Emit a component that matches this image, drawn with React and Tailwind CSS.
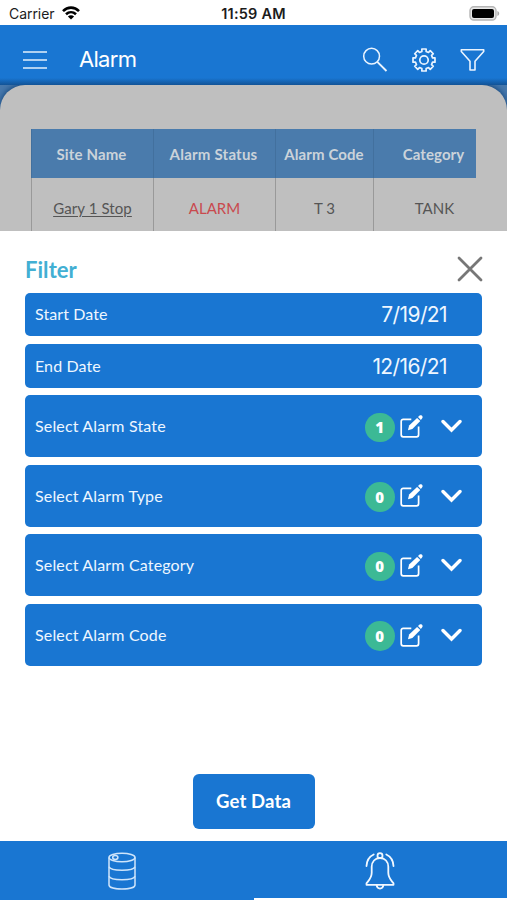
import React, { useState } from 'react'

const columns = [
  { label: 'Site Name', width: 'w-[122px]', head: 'tracking-[0.150px] pr-[2px]' },
  { label: 'Alarm Status', width: 'w-[122px]', head: 'tracking-[0.220px] pr-[2px]' },
  { label: 'Alarm Code', width: 'w-[98px]', head: 'tracking-[0.100px] pr-[1px]' },
  { label: 'Category', width: 'w-[120px]', head: 'tracking-[0.100px]' }
]

const dates = [
  { label: 'Start Date', value: '7/19/21' },
  { label: 'End Date', value: '12/16/21' }
]

const selects = [
  { label: 'Select Alarm State', count: 1 },
  { label: 'Select Alarm Type', count: 0 },
  { label: 'Select Alarm Category', count: 0 },
  { label: 'Select Alarm Code', count: 0 }
]

// outline of an eight tooth cog around (13, 13)
function gearPath() {
  const at = (r, deg) => {
    const a = (deg * Math.PI) / 180
    return `${(13 + r * Math.cos(a)).toFixed(2)} ${(13 + r * Math.sin(a)).toFixed(2)}`
  }
  const pts = []
  for (let i = 0; i < 8; i++) {
    const c = i * 45
    pts.push(at(8.8, c - 14), at(11.2, c - 11), at(11.2, c + 11), at(8.8, c + 14))
  }
  return `M${pts.join('L')}Z`
}

function StatusBar() {
  return (
    <div className="h-[25px] px-[9px] grid grid-cols-3 items-center text-[14px] text-[#1c1c1c]">
      <div className="flex items-center gap-[7px] pt-[2px]">
        <span className="tracking-[-0.05px]">Carrier</span>
        <svg width="18" height="14" viewBox="0 0 18 14" className="mb-[1px]" fill="none" stroke="#000" strokeWidth="2.6">
          <path d="M1 5.100C5.600.5 12.400.5 17 5.100" />
          <path d="M4 8.300c3-2.800 7-2.800 10 0" />
          <path d="M9 13.600 5.900 10.500c1.800-1.600 4.400-1.600 6.200 0Z" fill="#000" stroke="none" />
        </svg>
      </div>
      <div className="pt-[2px] text-center font-semibold whitespace-nowrap text-[14.500px] tracking-[0.200px]">11:59 AM</div>
      <div className="flex justify-end pt-[1px] -mr-[2px]">
        <svg width="32" height="15" viewBox="0 0 32 15">
          <rect x="2" y=".8" width="26" height="13.200" rx="3.800" fill="#e8e8e8" stroke="#b5b5b5" strokeWidth="1.400" />
          <rect x="4" y="3" width="22" height="9" rx="2" fill="#000" />
          <path d="M29.400 5v5c1.200-.5 1.800-1.400 1.800-2.500S30.600 5.500 29.400 5Z" fill="#aaa" />
        </svg>
      </div>
    </div>
  )
}

function Header() {
  return (
    <header className="h-[60px] flex items-center px-[23px] bg-[#1976d2] bg-[linear-gradient(to_bottom,transparent_53px,#125396)] text-white">
      <svg width="24" height="18" viewBox="0 0 24 18" className="mt-[9px]" stroke="#e2effc" strokeWidth="1.600">
        <path d="M0 1h24M0 9h24M0 17h24" />
      </svg>
      <h1 className="ml-[32px] mt-[8px] text-[22px] leading-[26px] tracking-[-0.700px] font-normal">Alarm</h1>
      <div className="ml-auto mt-[9px] -mr-[2px] flex items-center gap-[23px]">
        <svg width="26" height="26" viewBox="0 0 26 26" fill="none" stroke="#eaf4ff" strokeWidth="1.500">
          <circle cx="9.600" cy="9.200" r="7.900" />
          <path d="m15.300 14.800 9.200 9.200" strokeWidth="1.900" />
        </svg>
        <svg width="26" height="26" viewBox="0 0 26 26" fill="none" stroke="#eaf4ff" strokeWidth="1.700" strokeLinejoin="round">
          <path d={gearPath()} />
          <circle cx="13" cy="13" r="4.200" />
        </svg>
        <svg width="26" height="26" viewBox="0 0 26 26" fill="none" stroke="#eaf4ff" strokeWidth="1.600" strokeLinejoin="round">
          <path d="M1.300 2.800h22.400v1.700l-8.700 9.700V23h-5v-8.800L1.300 4.500Z" />
        </svg>
      </div>
    </header>
  )
}

function AlarmTable() {
  const cell = 'shrink-0 flex items-center justify-center border-l'
  return (
    <div className="h-[146px] bg-[#4879ad] overflow-hidden">
      <div className="h-full rounded-t-[25px] bg-[#bfbfbf] pt-[44px] pl-[31px] shadow-[0_-1px_6px_#0f4278]">
        <div className="w-[445px] overflow-hidden font-[Lato,sans-serif] text-[15px]">
          <div className="flex h-[49px] bg-[#4a7bac] text-[#cbd3da] font-bold">
            {columns.map((c) => (
              <div key={c.label} className={`${cell} ${c.width} ${c.head} border-[#42709e] pt-[1px]`}>{c.label}</div>
            ))}
          </div>
          <div className="flex h-[53px] text-[#555]">
            <div className={`${cell} w-[122px] border-[#999] pt-[7px]`}>
              <span className="underline underline-offset-2 decoration-1 tracking-[0.100px]">Gary 1 Stop</span>
            </div>
            <div className={`${cell} w-[122px] border-[#999] pt-[7px] text-[#c94a4e]`}>ALARM</div>
            <div className={`${cell} w-[98px] border-[#999] pt-[7px]`}>T 3</div>
            <div className={`${cell} w-[120px] border-[#999] pt-[7px] pl-[2px]`}>TANK</div>
          </div>
        </div>
      </div>
    </div>
  )
}

function EditIcon() {
  return (
    <svg width="25" height="25" viewBox="0 0 25 25" fill="none" stroke="#fff" strokeWidth="1.700">
      <path d="M12.300 5.300H4.200a2 2 0 0 0-2 2v13.500a2 2 0 0 0 2 2h13.400a2 2 0 0 0 2-2v-8.300" />
      <path d="m9 16.300 1.100-4.700 8-7.700 3.200 3.200-7.900 7.800Z" fill="#fff" stroke="none" />
      <path d="m19 3.100 1.600-1.500c1.700-1.300 4 .9 2.600 2.700L21.900 6Z" fill="#fff" stroke="none" />
    </svg>
  )
}

function SelectRow({ label, count }) {
  return (
    <button className="w-full h-[62px] pl-[10px] pr-[20px] flex items-center rounded-[5px] bg-[#1976d2] text-[#eef6ff]">
      <span className="text-[16px] tracking-[0.160px]">{label}</span>
      <span className="ml-auto mt-[2px] size-[29.500px] rounded-full bg-[#3cb995] text-white flex items-center justify-center font-['Open_Sans',sans-serif] text-[15px] font-extrabold">{count}</span>
      <span className="ml-[4.500px]"><EditIcon /></span>
      <svg width="21" height="14" viewBox="0 0 21 14" className="ml-[17px]" fill="none" stroke="#fff" strokeWidth="3.400" strokeLinecap="round">
        <path d="m2 2.500 8.500 8.500L19 2.500" />
      </svg>
    </button>
  )
}

function FilterSheet() {
  const [picked] = useState(selects)

  return (
    <section className="h-[610px] bg-white px-[25px] font-[Lato,sans-serif]">
      <div className="h-[61.500px] pt-[15px] flex items-center justify-between">
        <h2 className="text-[22px] font-bold text-[#42afd3] tracking-[0.050px]">Filter</h2>
        <svg width="26" height="26" viewBox="0 0 26 26" className="-mr-[1px]" stroke="#777" strokeWidth="2.800" strokeLinecap="round">
          <path d="m2 2 22 22M24 2 2 24" />
        </svg>
      </div>

      <div className="flex flex-col gap-[7.600px]">
        {dates.map((d) => (
          <div key={d.label} className="h-[43.800px] pl-[10px] pr-[35px] flex items-center justify-between rounded-[5px] bg-[#1976d2] text-[#eef6ff]">
            <span className="text-[16px] tracking-[0.100px]">{d.label}</span>
            <span className="pt-[1px] font-[Inter,sans-serif] text-[21px] tracking-[-0.600px]">{d.value}</span>
          </div>
        ))}
        {picked.map((s) => (
          <SelectRow key={s.label} label={s.label} count={s.count} />
        ))}
      </div>

      <button className="block mx-auto mt-[107.500px] w-[122px] h-[55px] pt-[1px] rounded-[6px] bg-[#1976d2] text-white text-[18.500px] font-bold tracking-[0.150px]">
        Get Data
      </button>
    </section>
  )
}

function TabBar() {
  return (
    <nav className="h-[59px] grid grid-cols-2 bg-[#1976d2]">
      <div className="flex items-center justify-center -ml-[9px]">
        <svg width="28" height="38" viewBox="0 0 28 38" fill="none" stroke="#cfe5fb" strokeWidth="1.500">
          <ellipse cx="14" cy="5.500" rx="13" ry="4.200" />
          <path d="M1 5.500v27.500c0 5.300 26 5.300 26 0V5.500" />
          <path d="M1 14.800c1.500 4.600 24.500 4.600 26 0M1 24.200c1.500 4.600 24.500 4.600 26 0" />
          <ellipse cx="7.300" cy="5.500" rx="2.600" ry="1.900" />
        </svg>
      </div>
      <div className="flex items-center justify-center border-b-[2.500px] border-white">
        <svg width="30" height="38" viewBox="0 0 30 38" className="mt-[3px]" fill="none" stroke="#f1f8ff" strokeWidth="1.800" strokeLinejoin="round" strokeLinecap="round">
          <circle cx="15" cy="3.700" r="2.500" />
          <path d="M15 6c-5 0-8.300 3.700-8.300 8.800v6c0 5-2.200 6.800-5.200 10.500v1.500h27v-1.500c-3-3.700-5.200-5.500-5.200-10.500v-6C23.300 9.700 20 6 15 6Z" />
          <path d="M11.600 33c.6 4.700 6.200 4.700 6.800 0" />
          <path d="M8.700 2.500C4.500 4.500 1.700 8.700 1.500 14M21.300 2.500c4.200 2 7 6.200 7.200 11.500" />
        </svg>
      </div>
    </nav>
  )
}

export default function App() {
  return (
    <div className="w-[507px] h-[900px] overflow-hidden bg-white font-[Inter,sans-serif]">
      <StatusBar />
      <Header />
      <AlarmTable />
      <FilterSheet />
      <TabBar />
    </div>
  )
}
